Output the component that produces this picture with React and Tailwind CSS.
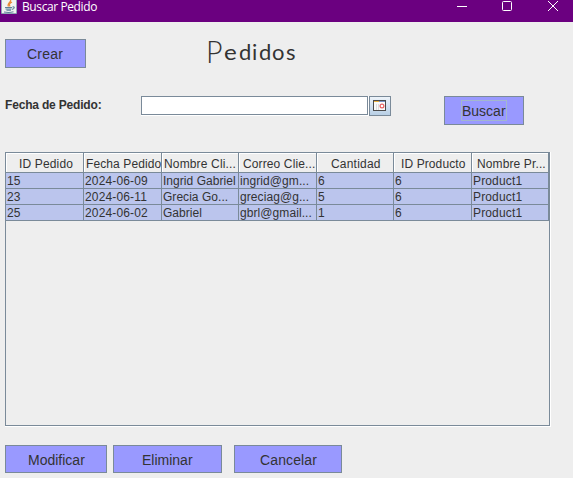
import React from 'react';

const columns = [
  { label: 'ID Pedido', style: 'pl-[12px] tracking-[0.15px]' },
  { label: 'Fecha Pedido', style: 'pl-[1px] tracking-[0.1px]' },
  { label: 'Nombre Cli...', style: 'pl-[1px] tracking-[0.15px]' },
  { label: 'Correo Clie...', style: 'pl-[3px] tracking-[0.12px]' },
  { label: 'Cantidad', style: 'pl-[13px] tracking-[0.2px]' },
  { label: 'ID Producto', style: 'pl-[6px] tracking-[0.1px]' },
  { label: 'Nombre Pr...', style: 'pl-[4px] tracking-[0.12px]' },
];

const rows = [
  ['15', '2024-06-09', 'Ingrid Gabriel', 'ingrid@gm...', '6', '6', 'Product1'],
  ['23', '2024-06-11', 'Grecia Go...', 'greciag@g...', '5', '6', 'Product1'],
  ['25', '2024-06-02', 'Gabriel', 'gbrl@gmail...', '1', '6', 'Product1'],
];

const cellTracking = [
  'tracking-[0.2px]',
  'tracking-[0.15px]',
  'tracking-[0.04px]',
  'tracking-[0.08px]',
  'tracking-[0.2px]',
  'tracking-[0.2px]',
  'tracking-[0.15px]',
];

const grid = 'grid grid-cols-[78px_78px_77px_78px_77px_78px_77px]';

function Button({ className, children }) {
  return (
    <button
      className={`flex shrink-0 items-center border border-[#7a8a99] bg-[#9999ff] text-[14px] leading-[16px] text-[#333] ${className}`}
    >
      {children}
    </button>
  );
}

function JavaIcon() {
  return (
    <svg width="16" height="14" viewBox="0 0 16 14" className="shrink-0">
      <rect x="0" y="-3" width="16" height="17" rx="1" fill="#8faab5" />
      <rect x="1" y="-2" width="14" height="15" fill="#f1f3f2" />
      <path d="M9.5 0C10.5 2 5.5 3.5 7.5 6.5M11 2C8 3.5 8 4.5 9 6.5" fill="none" stroke="#e88a35" strokeWidth="1.3" />
      <path d="M4 7.5h7M4.5 9h6M5.5 10.3h4.5M3 12q5 1 9.5-.2M11.5 7c2.5-.7 2.3 1.8-.5 2.4" fill="none" stroke="#5d8199" strokeWidth="1.1" />
    </svg>
  );
}

function CalendarIcon() {
  return (
    <svg width="14" height="12" viewBox="0 0 14 12" shapeRendering="crispEdges">
      <rect x="0" y="0" width="13" height="11" fill="#4a4a4a" />
      <rect x="1" y="2" width="11" height="8" fill="#fafafa" />
      <rect x="1" y="1" width="5" height="1" fill="#e8b040" />
      <rect x="6" y="1" width="6" height="1" fill="#7894c8" />
      <path d="M3.5 4v6M5.5 4v6" stroke="#dedede" />
      <circle cx="9" cy="6" r="1.9" fill="#fff" stroke="#e76363" strokeWidth="1.2" shapeRendering="auto" />
    </svg>
  );
}

function TitleBar() {
  return (
    <header className="flex h-[22px] items-start bg-[#6b0080] text-white">
      <div className="flex pl-px">
        <JavaIcon />
        <span className="ml-[5px] whitespace-nowrap font-['Open_Sans','Noto_Sans',sans-serif] text-[12px] leading-[14px] tracking-[-0.4px]">
          Buscar Pedido
        </span>
      </div>
      <svg width="110" height="14" viewBox="0 0 110 14" className="ml-auto mr-[10px]" fill="none" stroke="white">
        <path d="M4 6.5h10" />
        <rect x="49.5" y="1.5" width="9" height="9" rx="1" />
        <path d="M95 1l10 10M105 1L95 11" />
      </svg>
    </header>
  );
}

function Heading() {
  return (
    <h1 className="-mt-1 ml-[120px] flex h-[30px] items-baseline font-['Lato',sans-serif] text-[22px] font-normal leading-[30px] text-[#333]">
      <span className="inline-block w-[18px] origin-[0_80%] translate-y-[3px] scale-x-110 scale-y-[1.2] text-[26px] font-light">P</span>
      <span className="inline-block w-[15px] origin-left scale-x-110">e</span>
      <span className="inline-block w-[13px]">d</span>
      <span className="inline-block w-[7px]">i</span>
      <span className="inline-block w-[13px]">d</span>
      <span className="inline-block w-[14px]">o</span>
      <span className="inline-block w-[10px]">s</span>
    </h1>
  );
}

function OrdersTable() {
  return (
    <section className="ml-[5px] mt-[27px] h-[275px] w-[546px] border-b border-r border-white">
      <div className="h-[274px] w-[545px] border border-[#7a8a99] text-[12px] text-[#333]">
        <div className={grid}>
          {columns.map((c) => (
            <div key={c.label} className="h-[20px] border-b border-r border-[#7a8a99]">
              <div className={`h-full whitespace-nowrap border-l border-t border-white leading-[20px] ${c.style}`}>
                {c.label}
              </div>
            </div>
          ))}
        </div>
        {rows.map((row) => (
          <div key={row[0]} className={grid}>
            {row.map((cell, i) => (
              <div
                key={i}
                className={`h-[16px] whitespace-nowrap border-b border-r border-[#7a8a99] bg-[#bbc5ed] pl-px leading-[16px] ${cellTracking[i]}`}
              >
                {cell}
              </div>
            ))}
          </div>
        ))}
      </div>
    </section>
  );
}

export default function App() {
  return (
    <main className="h-[478px] w-[573px] overflow-hidden bg-[#eee] font-['Liberation_Sans',Arial,sans-serif]">
      <TitleBar />
      <div className="flex h-[74px] pl-[5px] pt-[17px]">
        <Button className="h-[29px] w-[81px] pl-[21px] tracking-[0.2px]">Crear</Button>
        <Heading />
      </div>
      <div className="flex h-[29px] items-start pl-[5px]">
        <label className="w-[136px] text-[12px] font-bold leading-[19px] tracking-[-0.18px] text-[#333]">Fecha de Pedido:</label>
        <div className="h-[20px] w-[228px] border-b border-r border-white">
          <div className="h-[19px] w-[227px] border border-[#7a8a99] bg-white" />
        </div>
        <div className="flex h-[20px] w-[22px] items-center justify-center border border-[#7a8a99] bg-gradient-to-b from-[#eef4fa] to-[#b8cfe5]">
          <CalendarIcon />
        </div>
        <Button className="ml-[53px] h-[29px] w-[80px] pl-[16px]">
          <span className="h-[21px] w-[46px] border border-[#a3b8cc] text-left leading-[20px]">Buscar</span>
        </Button>
      </div>
      <OrdersTable />
      <footer className="flex pl-[5px] pt-[18px]">
        <Button className="h-[28px] w-[102px] pl-[22px] pt-[2px]">Modificar</Button>
        <Button className="ml-[6px] h-[28px] w-[109px] pl-[28px] pt-[2px]">Eliminar</Button>
        <Button className="ml-[12px] h-[28px] w-[108px] pl-[25px] pt-[2px] tracking-[0.12px]">Cancelar</Button>
      </footer>
    </main>
  );
}
